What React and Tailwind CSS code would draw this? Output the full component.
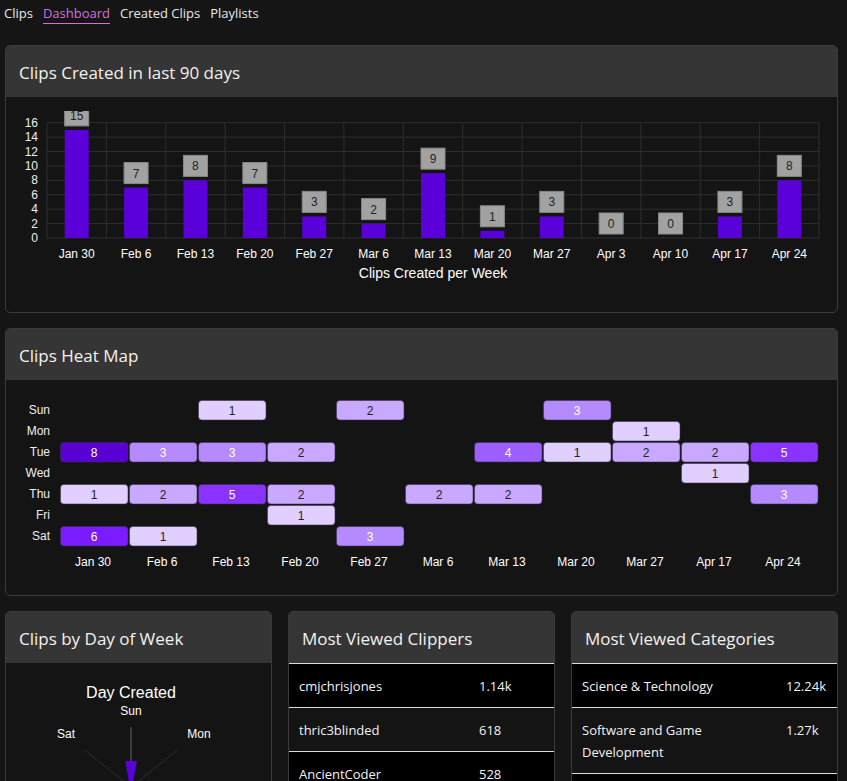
import React from "react";

const UI = { fontFamily: '"Open Sans", "Noto Sans", sans-serif' };
const AR = '"Liberation Sans", Arial, sans-serif';

const weeks = ["Jan 30","Feb 6","Feb 13","Feb 20","Feb 27","Mar 6","Mar 13","Mar 20","Mar 27","Apr 3","Apr 10","Apr 17","Apr 24"];
const values = [15,7,8,7,3,2,9,1,3,0,0,3,8];

function BarChart() {
  const x0 = 47, x1 = 819, yT = 122.7, yB = 238;
  const unit = (yB - yT) / 16;
  const cw = (x1 - x0) / 13;
  return (
    <svg width="831" height="215" className="block">
      <defs>
        <clipPath id="clipTop"><rect x="0" y="111" width="900" height="300" /></clipPath>
      </defs>
      <g transform="translate(-6,-97)" fontFamily={AR}>
        {[0,2,4,6,8,10,12,14,16].map((v) => (
          <g key={v}>
            <line x1={x0} x2={x1} y1={yB - v * unit} y2={yB - v * unit} stroke="#2e2e2e" strokeWidth="1" />
            <text x={38} y={yB - v * unit + 4} fontSize="12" fill="#eeeeee" textAnchor="end">{v}</text>
          </g>
        ))}
        {Array.from({ length: 14 }).map((_, i) => (
          <line key={i} x1={x0 + i * cw} x2={x0 + i * cw} y1={yT} y2={yB} stroke="#2e2e2e" strokeWidth="1" />
        ))}
        <g clipPath="url(#clipTop)">
          {values.map((v, i) => {
            const cx = x0 + cw * i + cw / 2;
            const top = yB - v * unit;
            return (
              <g key={i}>
                {v > 0 && <rect x={cx - 12} y={top} width="24" height={v * unit} fill="#5a00d8" />}
                <rect x={cx - 12} y={top - 25} width="24" height="21" fill="#a2a2a2" stroke="#8a8a8a" strokeWidth="1" />
                <text x={cx} y={top - 10} fontSize="12" fill="#222" textAnchor="middle">{v}</text>
              </g>
            );
          })}
        </g>
        {weeks.map((w, i) => (
          <text key={w} x={x0 + cw * i + cw / 2} y={258} fontSize="12" fill="#ffffff" textAnchor="middle">{w}</text>
        ))}
        <text x={433} y={278} fontSize="14" fill="#ffffff" textAnchor="middle">Clips Created per Week</text>
      </g>
    </svg>
  );
}

const heatCols = ["Jan 30","Feb 6","Feb 13","Feb 20","Feb 27","Mar 6","Mar 13","Mar 20","Mar 27","Apr 17","Apr 24"];
const days = ["Sun","Mon","Tue","Wed","Thu","Fri","Sat"];
const heat = [
  [0,0,1,0,2,0,0,3,0,0,0],
  [0,0,0,0,0,0,0,0,1,0,0],
  [8,3,3,2,0,0,4,1,2,2,5],
  [0,0,0,0,0,0,0,0,0,1,0],
  [1,2,5,2,0,2,2,0,0,0,3],
  [0,0,0,1,0,0,0,0,0,0,0],
  [6,1,0,0,3,0,0,0,0,0,0],
];
const heatColor = { 1: "#e0cfff", 2: "#c9a9ff", 3: "#b58aff", 4: "#9c5eff", 5: "#8a33ff", 6: "#7a1cff", 8: "#5900d4" };

function HeatMap() {
  const cx0 = 60, pitch = 69, ry0 = 400, rp = 21;
  return (
    <svg width="831" height="215" className="block">
      <g transform="translate(-6,-380)" fontFamily={AR}>
        {days.map((d, r) => (
          <text key={d} x={50} y={ry0 + r * rp + 14} fontSize="12" fill="#eeeeee" textAnchor="end">{d}</text>
        ))}
        {heat.map((row, r) =>
          row.map((v, c) =>
            v > 0 ? (
              <g key={r + "-" + c}>
                <rect x={cx0 + c * pitch + 0.5} y={ry0 + r * rp + 0.5} width={67.5} height={19.5} rx="3.5" fill={heatColor[v]} stroke="rgba(60,50,80,0.55)" strokeWidth="1" />
                <text x={cx0 + c * pitch + 34} y={ry0 + r * rp + 14.5} fontSize="12" fill={v >= 3 ? "#ffffff" : "#222222"} textAnchor="middle">{v}</text>
              </g>
            ) : null
          )
        )}
        {heatCols.map((w, i) => (
          <text key={w} x={cx0 + i * pitch + 33} y={566} fontSize="12" fill="#ffffff" textAnchor="middle">{w}</text>
        ))}
      </g>
    </svg>
  );
}

function Polar() {
  const cx = 131, cy = 787, R = 60;
  const labels = ["Sun","Mon","Tue","Wed","Thu","Fri","Sat"];
  return (
    <svg width="265" height="200" className="block">
      <g transform="translate(-6,-663)" fontFamily={AR}>
        <text x={cx} y={698} fontSize="16" fill="#ffffff" textAnchor="middle">Day Created</text>
        {labels.map((l, i) => {
          const a = (i * 2 * Math.PI) / 7;
          const ex = cx + R * Math.sin(a), ey = cy - R * Math.cos(a);
          return <line key={l} x1={cx} y1={cy} x2={ex} y2={ey} stroke={i === 0 ? "#3c3c3c" : "#2e2e2e"} strokeWidth={i === 0 ? 2 : 1} />;
        })}
        <text x={cx} y={715} fontSize="12" fill="#ffffff" textAnchor="middle">Sun</text>
        <text x={66} y={738} fontSize="12" fill="#ffffff" textAnchor="middle">Sat</text>
        <text x={199} y={738} fontSize="12" fill="#ffffff" textAnchor="middle">Mon</text>
        <polygon points={`${cx - 6},761 ${cx + 6},761 ${cx},792`} fill="#5a00d8" />
      </g>
    </svg>
  );
}

function Card({ title, children, className = "" }) {
  return (
    <div className={"rounded-[5px] border border-[#3b3b3b] bg-[#141414] overflow-hidden " + className}>
      <div className="h-[51px] bg-[#353535] flex items-center pl-[13px] pt-[2px] text-[17px] text-[#f2f2f2]" style={UI}>{title}</div>
      {children}
    </div>
  );
}

function TableCard({ title, rows, nameW }) {
  return (
    <Card title={title}>
      <div className="border-t border-[#dcdcdc]" style={UI}>
        {rows.map((r, i) => (
          <div key={i} className={"flex border-b border-[#dcdcdc] text-[13px] leading-[22px] text-[#f2f2f2] py-[10.5px] " + (i % 2 === 0 ? "bg-black" : "bg-[#141414]")}>
            <div className="px-[10px] shrink-0" style={{ width: nameW }}>{r[0]}</div>
            <div className="px-[10px]">{r[1]}</div>
          </div>
        ))}
      </div>
    </Card>
  );
}

export default function App() {
  return (
    <div className="min-h-screen bg-[#151515] pl-[5px] pr-[9px]" style={UI}>
      <nav className="flex gap-[10px] h-[28px] items-start pt-[4px] -ml-[1px] text-[13px] leading-[19px] text-[#e8e8e8]">
        <span>Clips</span>
        <span className="text-[#d46fdb] border-b border-[#d46fdb]">Dashboard</span>
        <span>Created Clips</span>
        <span>Playlists</span>
      </nav>
      <div className="mt-[17px] flex flex-col gap-[15px]">
        <Card title="Clips Created in last 90 days">
          <BarChart />
        </Card>
        <Card title="Clips Heat Map">
          <HeatMap />
        </Card>
        <div className="grid grid-cols-3 gap-[16px]">
          <Card title="Clips by Day of Week">
            <Polar />
          </Card>
          <TableCard title="Most Viewed Clippers" nameW={180} rows={[["cmjchrisjones","1.14k"],["thric3blinded","618"],["AncientCoder","528"],["someone","400"]]} />
          <TableCard title="Most Viewed Categories" nameW={204} rows={[["Science & Technology","12.24k"],["Software and Game Development","1.27k"],["Just Chatting","500"]]} />
        </div>
      </div>
    </div>
  );
}
